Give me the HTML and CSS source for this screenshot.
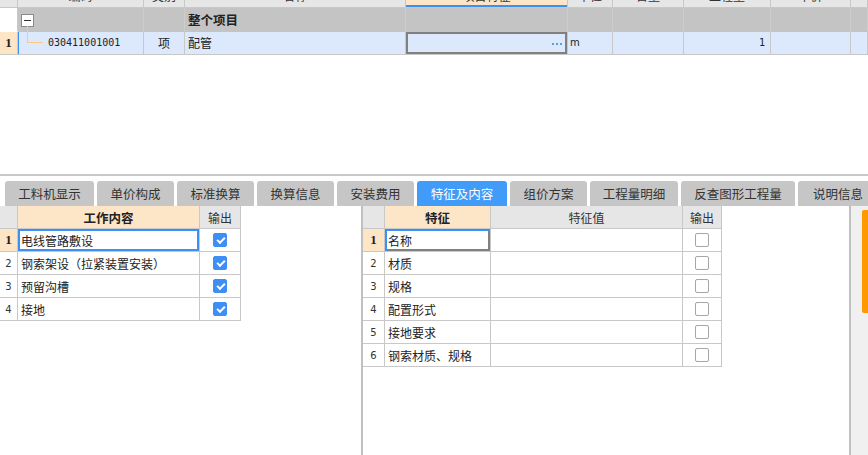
FILE: index.html
```html
<!DOCTYPE html>
<html lang="zh">
<head>
<meta charset="utf-8">
<title>特征及内容</title>
<link rel="stylesheet" href="styles.css">
</head>
<body>
<div class="app">
  <div class="top">
    <div class="grid">
      <div class="c hd num"></div>
      <div class="c hd"><span>编码</span></div>
      <div class="c hd"><span>类别</span></div>
      <div class="c hd"><span>名称</span></div>
      <div class="c hd hd-sel"><span>项目特征</span></div>
      <div class="c hd"><span>单位</span></div>
      <div class="c hd"><span>含量</span></div>
      <div class="c hd"><span>工程量</span></div>
      <div class="c hd"><span>单价</span></div>
      <div class="c hd"><span></span></div>

      <div class="c grp num-blank"></div>
      <div class="c grp"><span class="tbox"></span></div>
      <div class="c grp"></div>
      <div class="c grp bold">整个项目</div>
      <div class="c grp"></div>
      <div class="c grp"></div>
      <div class="c grp"></div>
      <div class="c grp"></div>
      <div class="c grp"></div>
      <div class="c grp"></div>

      <div class="c it rn">1</div>
      <div class="c it code">030411001001</div>
      <div class="c it center">项</div>
      <div class="c it">配管</div>
      <div class="c it edit"><span class="dots"><i></i><i></i><i></i></span></div>
      <div class="c it unit">m</div>
      <div class="c it"></div>
      <div class="c it qty">1</div>
      <div class="c it"></div>
      <div class="c it"></div>
    </div>
    <div class="tree-line"></div>
  </div>
  <div class="divider"></div>
  <div class="tabs">
    <div class="tab w89">工料机显示</div>
    <div class="tab w77">单价构成</div>
    <div class="tab w77">标准换算</div>
    <div class="tab w77">换算信息</div>
    <div class="tab w77">安装费用</div>
    <div class="tab w90 active">特征及内容</div>
    <div class="tab w77">组价方案</div>
    <div class="tab w88">工程量明细</div>
    <div class="tab w114">反查图形工程量</div>
    <div class="tab w80">说明信息</div>
  </div>
  <div class="bottom">
    <div class="pane-left">
      <div class="tbl tbl-left">
        <div class="c2 h2"></div>
        <div class="c2 h2 peach bold">工作内容</div>
        <div class="c2 h2">输出</div>

        <div class="c2 rn2 sel-num">1</div>
        <div class="c2 txt sel-blue">电线管路敷设</div>
        <div class="c2 chk"><span class="cb on"></span></div>

        <div class="c2 rn2">2</div>
        <div class="c2 txt">钢索架设（拉紧装置安装）</div>
        <div class="c2 chk"><span class="cb on"></span></div>

        <div class="c2 rn2">3</div>
        <div class="c2 txt">预留沟槽</div>
        <div class="c2 chk"><span class="cb on"></span></div>

        <div class="c2 rn2">4</div>
        <div class="c2 txt">接地</div>
        <div class="c2 chk"><span class="cb on"></span></div>
      </div>
    </div>
    <div class="vbar"></div>
    <div class="pane-right">
      <div class="tbl tbl-right">
        <div class="c2 h2"></div>
        <div class="c2 h2 peach bold">特征</div>
        <div class="c2 h2">特征值</div>
        <div class="c2 h2">输出</div>

        <div class="c2 rn2 sel-num">1</div>
        <div class="c2 txt sel-mix">名称</div>
        <div class="c2"></div>
        <div class="c2 chk"><span class="cb"></span></div>

        <div class="c2 rn2">2</div>
        <div class="c2 txt">材质</div>
        <div class="c2"></div>
        <div class="c2 chk"><span class="cb"></span></div>

        <div class="c2 rn2">3</div>
        <div class="c2 txt">规格</div>
        <div class="c2"></div>
        <div class="c2 chk"><span class="cb"></span></div>

        <div class="c2 rn2">4</div>
        <div class="c2 txt">配置形式</div>
        <div class="c2"></div>
        <div class="c2 chk"><span class="cb"></span></div>

        <div class="c2 rn2">5</div>
        <div class="c2 txt">接地要求</div>
        <div class="c2"></div>
        <div class="c2 chk"><span class="cb"></span></div>

        <div class="c2 rn2">6</div>
        <div class="c2 txt">钢索材质、规格</div>
        <div class="c2"></div>
        <div class="c2 chk"><span class="cb"></span></div>
      </div>
    </div>
    <div class="vbar"></div>
    <div class="side"><div class="orange"></div></div>
  </div>
</div>
</body>
</html>
```
FILE: styles.css
```css
* { box-sizing: border-box; }
html, body { margin: 0; padding: 0; }
body {
  width: 868px;
  height: 455px;
  overflow: hidden;
  background: #fff;
  font-family: "Noto Sans CJK SC", "DejaVu Sans", sans-serif;
  font-size: 12px;
  color: #222;
}
.app { display: flex; flex-direction: column; height: 455px; }

/* top grid */
.top { position: relative; height: 174px; }
.grid {
  display: grid;
  grid-template-columns: 18px 126px 41px 221px 162px 45px 71px 87px 80px 17px;
  grid-template-rows: 8px 24px 23px;
}
.c {
  border-right: 1px solid #c8c8c8;
  border-bottom: 1px solid #c8c8c8;
  display: flex;
  align-items: center;
  overflow: hidden;
  white-space: nowrap;
  line-height: 16px;
}
.hd { background: #e6e6e6; justify-content: center; align-items: flex-start; }
.hd span { display: block; margin-top: -14px; line-height: 20px; color: #333; }
.hd-sel { background: #fde6c8; box-shadow: inset 0 -2px 0 #3d8ff5; }
.grp { background: #c4c4c4; border-right-color: #cdcdcd; border-bottom-color: #c4c4c4; }
.num-blank { background: #fff; border-right-color: #c8c8c8; border-bottom-color: #fff; }
.bold { font-weight: bold; padding-left: 3px; }
.grp.bold { padding-left: 3px; font-size: 12.5px; color: #222; }
.tbox {
  width: 13px; height: 13px;
  margin-left: 3px; margin-top: 1px;
  border: 1px solid #8a8a8a;
  background: #fff;
  position: relative;
}
.tbox::after {
  content: "";
  position: absolute;
  left: 2px; right: 2px; top: 5px;
  height: 1px;
  background: #333;
}
.it { background: #dce8fb; padding-left: 3px; }
.rn {
  background: #fde5c6;
  justify-content: center;
  padding-left: 0;
  font-family: "Liberation Serif", serif;
  font-weight: bold;
  font-size: 13px;
}
.code {
  font-family: "DejaVu Sans Mono", monospace;
  font-size: 10px;
  padding-left: 30px;
  box-shadow: inset 1px 0 0 #3d8ff5;
  color: #222;
}
.center { justify-content: center; padding-left: 0; }
.edit { box-shadow: inset 0 0 0 2px #808080; justify-content: flex-end; padding-right: 5px; }
.dots { display: flex; gap: 2px; margin-top: 1px; }
.dots i { display: block; width: 2px; height: 2px; background: #5c9fdc; }
.unit { font-family: "DejaVu Sans", sans-serif; font-size: 10px; padding-left: 2px; }
.qty { justify-content: flex-end; padding-right: 5px; font-family: "DejaVu Sans Mono", monospace; font-size: 10px; }
.tree-line {
  position: absolute;
  left: 27px; top: 26px;
  width: 16px; height: 17px;
  border-left: 1px solid #ffc87a;
  border-bottom: 1px solid #ffc87a;
}

.divider { height: 2px; background: #c8c8c8; }

/* tabs */
.tabs {
  display: flex;
  gap: 3px;
  padding-left: 5px;
  margin-top: 5px;
  height: 25px;
}
.tab {
  flex: none;
  background: #c6c6c6;
  border-radius: 3px 3px 0 0;
  display: flex;
  align-items: center;
  justify-content: center;
  font-size: 12.5px;
  color: #333;
  white-space: nowrap;
}
.tab.active { background: #419cf9; color: #fff; }
.w77 { width: 77px; } .w80 { width: 80px; } .w88 { width: 88px; }
.w89 { width: 89px; } .w90 { width: 90px; } .w114 { width: 114px; }

/* bottom */
.bottom { display: flex; flex: 1; min-height: 0; }
.pane-left { width: 361px; background: #fff; }
.vbar { width: 2px; background: #c0c0c0; }
.pane-right { width: 486px; background: #fff; }
.side { width: 17px; background: #f0f0f0; padding-top: 4px; padding-left: 11px; }
.orange { width: 6px; height: 103px; background: #ff9900; border-radius: 2px 0 0 2px; }

.tbl { display: grid; grid-auto-rows: 23px; }
.tbl-left { grid-template-columns: 18px 182px 41px; width: 241px; }
.tbl-right { grid-template-columns: 22px 106px 192px 39px; width: 359px; }
.c2 {
  border-right: 1px solid #c8c8c8;
  border-bottom: 1px solid #c8c8c8;
  display: flex;
  align-items: center;
  white-space: nowrap;
  overflow: hidden;
}
.h2 { background: #e6e6e6; justify-content: center; color: #333; }
.peach { background: #fde6c8; }
.h2.bold { padding-left: 0; font-size: 12.5px; color: #222; }
.rn2 {
  justify-content: center;
  font-family: "DejaVu Sans", sans-serif;
  font-size: 10px;
  color: #333;
}
.sel-num {
  background: #fde5c6;
  font-family: "Liberation Serif", serif;
  font-weight: bold;
  font-size: 13px;
  color: #222;
}
.txt { padding-left: 3px; color: #222; }
.sel-blue { box-shadow: inset 0 0 0 2px #3d8ff5; }
.sel-mix { box-shadow: inset 2px 2px 0 #3d8ff5, inset -2px -2px 0 #808080; }
.chk { justify-content: center; }
.cb {
  width: 14px; height: 14px;
  border: 1px solid #a6a6a6;
  border-radius: 2px;
  background: #fff;
  position: relative;
}
.cb.on { background: #3d8ff5; border-color: #3d8ff5; }
.cb.on::after {
  content: "";
  position: absolute;
  left: 3px; top: 2px;
  width: 6px; height: 3px;
  border-left: 2px solid #fff;
  border-bottom: 2px solid #fff;
  transform: translate(0, 1px) rotate(-45deg);
}
```
